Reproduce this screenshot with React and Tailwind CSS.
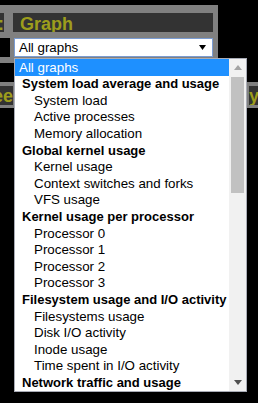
import React from "react";

const groups = [
  {
    label: "System load average and usage",
    items: ["System load", "Active processes", "Memory allocation"],
  },
  {
    label: "Global kernel usage",
    items: ["Kernel usage", "Context switches and forks", "VFS usage"],
  },
  {
    label: "Kernel usage per processor",
    items: ["Processor 0", "Processor 1", "Processor 2", "Processor 3"],
  },
  {
    label: "Filesystem usage and I/O activity",
    items: [
      "Filesystems usage",
      "Disk I/O activity",
      "Inode usage",
      "Time spent in I/O activity",
    ],
  },
  { label: "Network traffic and usage", items: [] },
];

function Row({ children, className = "" }) {
  return (
    <div className={`h-[16.6px] flex items-center whitespace-nowrap ${className}`}>
      {children}
    </div>
  );
}

/* ---------------- DROPDOWN LIST ---------------- */
function GraphList() {
  return (
    <div className="absolute top-[58px] left-[14px] w-[233px] h-[334px] bg-white border border-[#a9acb6] flex text-[13px] text-black leading-none">
      <div className="flex-1 flex flex-col">
        <Row className="bg-[#1e90ff] text-white pl-[4px] text-[13.33px]">All graphs</Row>
        {groups.map((g) => (
          <React.Fragment key={g.label}>
            <Row className="font-bold pl-[7px]">{g.label}</Row>
            {g.items.map((item) => (
              <Row key={item} className="pl-[19px] text-[13.33px]">
                {item}
              </Row>
            ))}
          </React.Fragment>
        ))}
      </div>

      {/* scrollbar */}
      <div className="w-[17px] bg-[#f1f1f1] flex flex-col">
        <div className="h-[17px] flex items-center justify-center">
          <svg width="8" height="5" viewBox="0 0 8 5">
            <polygon points="4,0 8,5 0,5" fill="#a3a3a3" />
          </svg>
        </div>
        <div className="flex-1 pt-[1px]">
          <div className="mx-[2px] h-[116px] bg-[#c1c1c1]" />
        </div>
        <div className="h-[17px] flex items-center justify-center">
          <svg width="8" height="5" viewBox="0 0 8 5">
            <polygon points="0,0 8,0 4,5" fill="#505050" />
          </svg>
        </div>
      </div>
    </div>
  );
}

/* ---------------- MAIN ---------------- */
export default function App() {
  return (
    <div className="relative min-h-screen bg-black pt-[5px] font-['Liberation_Sans',Arial,sans-serif]">
      {/* top panel */}
      <div className="w-[218px] bg-[#808080] flex gap-[3px] pt-[8px] pb-[6px] pr-[5px]">
        <div className="w-[10px] flex flex-col gap-[6px]">
          <div className="w-[4px] h-[19px] bg-[#333333] overflow-hidden flex justify-end text-[length:18px] font-bold leading-[22px] text-[#9d9d1c]">
            :
          </div>
          <div className="w-[10px] h-[19px] bg-black" />
        </div>
        <div className="w-[200px] flex flex-col gap-[6px]">
          <div className="h-[19px] bg-[#333333] pl-[7px] text-[length:18px] font-bold leading-[22px] text-[#9d9d1c] overflow-hidden whitespace-nowrap">
            Graph
          </div>
          <div className="ml-[1px] h-[19px] bg-white border border-[#7a9cd3] flex items-center justify-between pl-[4px] pr-[6px] text-[13.33px] text-black">
            <span>All graphs</span>
            <svg width="7" height="5" viewBox="0 0 7 5">
              <polygon points="0,0 7,0 3.5,5" fill="#000" />
            </svg>
          </div>
        </div>
      </div>

      {/* second panel (behind the list) */}
      <div className="mt-[19px] h-[26px] bg-[#808080] flex items-center justify-between">
        <div className="w-[13px] h-[19px] bg-[#333333] overflow-hidden flex justify-end text-[length:18px] font-bold leading-[20px] text-[#9d9d1c]">
          ee
        </div>
        <div className="w-[9px] h-[19px] bg-[#333333] overflow-hidden text-[length:18px] font-bold leading-[20px] text-[#9d9d1c]">
          y
        </div>
      </div>

      <GraphList />
    </div>
  );
}
